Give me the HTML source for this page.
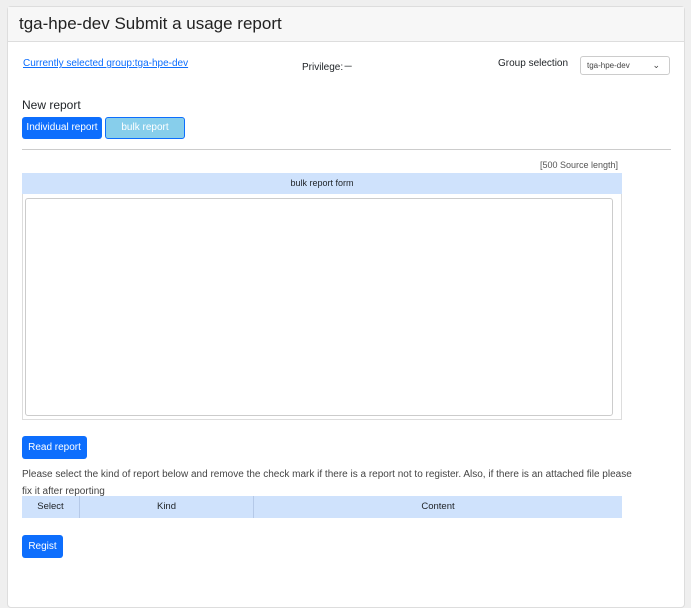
<!DOCTYPE html><html><head><style>
body{margin:0;width:691px;height:566px;background:#efefef;font-family:"Liberation Sans",sans-serif;position:relative;overflow:hidden;color:#212529}
.a{position:absolute}
.card{left:7px;top:6px;width:676px;height:600px;background:#fff;border:1px solid #ddd;border-radius:4px}
.hd{left:8px;top:7px;width:676px;height:34px;background:#f7f7f7;border-bottom:1px solid #ddd}
.btn{background:#0d6efd;color:#fff;font-size:10px;border-radius:3px;text-align:center}
</style></head><body>
<div class="a card"></div>
<div class="a hd"></div>
<div class="a" style="left:19px;top:14px;font-size:17px;color:#222">tga-hpe-dev Submit a usage report</div>
<div class="a" style="left:23px;top:58px;font-size:10px;color:#0d6efd;text-decoration:underline">Currently selected group:tga-hpe-dev</div>
<div class="a" style="left:302px;top:58px;font-size:10px">Privilege:－</div>
<div class="a" style="left:498px;top:58px;font-size:10px">Group selection</div>
<div class="a" style="left:580px;top:56px;width:88px;height:17px;border:1px solid #ccc;border-radius:3px;font-size:8px;color:#444;line-height:17px;padding-left:6px;box-sizing:border-box;width:90px;height:19px">tga-hpe-dev<span style="position:absolute;right:9px;top:0;font-size:9px">&#8964;</span></div>
<div class="a" style="left:22px;top:98px;font-size:12px">New report</div>
<div class="a btn" style="left:22px;top:117px;width:80px;height:22px;line-height:22px">Individual report</div>
<div class="a btn" style="left:105px;top:117px;width:78px;height:20px;line-height:20px;background:#87ceeb;border:1px solid #0d6efd">bulk report</div>
<div class="a" style="left:22px;top:149px;width:649px;height:1px;background:#ccc"></div>
<div class="a" style="left:540px;top:160px;font-size:9px;color:#555">[500 Source length]</div>
<div class="a" style="left:22px;top:173px;width:598px;height:245px;border:1px solid #ddd"></div>
<div class="a" style="left:22px;top:173px;width:600px;height:21px;background:#cfe2fc;font-size:9px;text-align:center;line-height:21px">bulk report form</div>
<div class="a" style="left:25px;top:198px;width:586px;height:216px;border:1px solid #ccc;border-radius:3px"></div>
<div class="a btn" style="left:22px;top:436px;width:65px;height:23px;line-height:23px">Read report</div>
<div class="a" style="left:22px;top:466px;font-size:10px;color:#444;line-height:17px;width:610px">Please select the kind of report below and remove the check mark if there is a report not to register. Also, if there is an attached file please fix it after reporting</div>
<div class="a" style="left:22px;top:496px;width:600px;height:22px;background:#cfe2fc;font-size:9.5px;line-height:22px">
<span class="a" style="left:0;width:57px;text-align:center;border-right:1px solid #b5c9e8;height:22px">Select</span>
<span class="a" style="left:58px;width:173px;text-align:center;border-right:1px solid #b5c9e8;height:22px">Kind</span>
<span class="a" style="left:232px;width:368px;text-align:center;height:22px">Content</span></div>
<div class="a btn" style="left:22px;top:535px;width:41px;height:23px;line-height:23px">Regist</div>
</body></html>
